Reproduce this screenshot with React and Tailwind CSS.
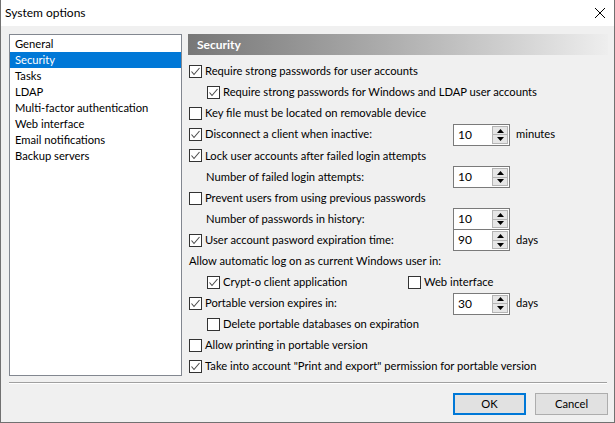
import React from "react";

const FONT = { fontFamily: 'Lato, "Liberation Sans", sans-serif' };

function Check({ checked }) {
  return (
    <div className="w-[13px] h-[13px] shrink-0 border border-[#333333] bg-white flex items-center justify-center">
      {checked && (
        <svg width="11" height="11" viewBox="0 0 11 11">
          <path d="M1.5 5.5 L4 8.5 L9.5 2" fill="none" stroke="#4a4a4a" strokeWidth="1.1" />
        </svg>
      )}
    </div>
  );
}

function Spin({ value }) {
  return (
    <div className="w-[57px] h-[22px] shrink-0 border border-[#7a7a7a] bg-white flex items-center">
      <span className="pl-[4px] flex-1 text-[12px] leading-none">{value}</span>
      <div className="w-[16px] h-[18px] mr-[1px] flex flex-col border border-[#b4b4b4]">
        <div className="flex-1 bg-[#e6e6e6] border-b border-[#b4b4b4] flex items-center justify-center">
          <svg width="7" height="4" viewBox="0 0 7 4"><path d="M3.5 0 L7 4 L0 4 Z" fill="#000" /></svg>
        </div>
        <div className="flex-1 bg-[#e6e6e6] flex items-center justify-center">
          <svg width="7" height="4" viewBox="0 0 7 4"><path d="M0 0 L7 0 L3.5 4 Z" fill="#000" /></svg>
        </div>
      </div>
    </div>
  );
}

function Row({ checked, label, indent, spin, unit, noBox }) {
  return (
    <div className="h-[21.1px] flex items-center whitespace-nowrap">
      <div className={`w-[264px] shrink-0 flex items-center ${indent ? "pl-[18px]" : ""}`}>
        {!noBox && <Check checked={checked} />}
        <span className={noBox ? "" : "pl-[3px]"}>{label}</span>
      </div>
      {spin && <Spin value={spin} />}
      {unit && <span className="pl-[6px]">{unit}</span>}
    </div>
  );
}

export default function App() {
  const items = [
    "General",
    "Security",
    "Tasks",
    "LDAP",
    "Multi-factor authentication",
    "Web interface",
    "Email notifications",
    "Backup servers",
  ];
  return (
    <div
      style={FONT}
      className="w-[615px] h-[423px] bg-[#f0f0f0] border-l border-r border-b border-[#717171] flex flex-col text-[11.2px] text-black overflow-hidden"
    >
      <div className="h-[26px] bg-white flex items-center justify-between pl-[4px] pr-[8px] shrink-0">
        <span className="text-[12px]">System options</span>
        <svg width="10" height="10" viewBox="0 0 10 10" className="mr-[1px]">
          <path d="M0 0 L10 10 M10 0 L0 10" stroke="#000" strokeWidth="1" />
        </svg>
      </div>
      <div className="flex pl-[8px] pr-[6px] pt-[8px]">
        <div className="w-[173px] h-[342px] shrink-0 border border-[#828790] bg-white pt-[1px] whitespace-nowrap">
          {items.map((it) => (
            <div
              key={it}
              className={`h-[16px] flex items-center pl-[5px] ${it === "Security" ? "bg-[#0078d7] text-white" : ""}`}
            >
              {it}
            </div>
          ))}
        </div>
        <div className="ml-[6px] flex-1 flex flex-col">
          <div className="h-[21px] bg-linear-to-r from-[#777777] via-[#b0b0b0] to-[#eeeeee] flex items-center pl-[9px] text-white font-bold text-[12px]">
            Security
          </div>
          <div className="mt-[6px] pl-[1px] flex flex-col">
            <Row checked label="Require strong passwords for user accounts" />
            <Row checked indent label="Require strong passwords for Windows and LDAP user accounts" />
            <Row label="Key file must be located on removable device" />
            <Row checked label="Disconnect a client when inactive:" spin="10" unit="minutes" />
            <Row checked label="Lock user accounts after failed login attempts" />
            <Row noBox label={<span className="pl-[17px]">Number of failed login attempts:</span>} spin="10" />
            <Row label="Prevent users from using previous passwords" />
            <Row noBox label={<span className="pl-[17px]">Number of passwords in history:</span>} spin="10" />
            <Row checked label="User account pasword expiration time:" spin="90" unit="days" />
            <Row noBox label="Allow automatic log on as current Windows user in:" />
            <div className="h-[21.1px] flex items-center whitespace-nowrap">
              <div className="w-[219px] shrink-0 flex items-center pl-[18px]">
                <Check checked />
                <span className="pl-[3px]">Crypt-o client application</span>
              </div>
              <Check />
              <span className="pl-[3px]">Web interface</span>
            </div>
            <Row checked label="Portable version expires in:" spin="30" unit="days" />
            <Row indent label="Delete portable databases on expiration" />
            <Row label="Allow printing in portable version" />
            <div className="h-[21.1px] flex items-center whitespace-nowrap">
              <Check checked />
              <span className="pl-[3px]">Take into account "Print and export" permission for portable version</span>
            </div>
          </div>
        </div>
      </div>
      <div className="mt-[5px] mx-[8px] mr-[7px] border-t border-[#a0a0a0] border-b border-b-white" />
      <div className="mt-[9px] flex justify-end gap-[9px] pr-[6px]">
        <div className="w-[73px] h-[22px] border-2 border-[#0078d7] bg-[#e1e1e1] flex items-center justify-center">OK</div>
        <div className="w-[73px] h-[22px] border border-[#adadad] bg-[#e1e1e1] flex items-center justify-center">Cancel</div>
      </div>
    </div>
  );
}
